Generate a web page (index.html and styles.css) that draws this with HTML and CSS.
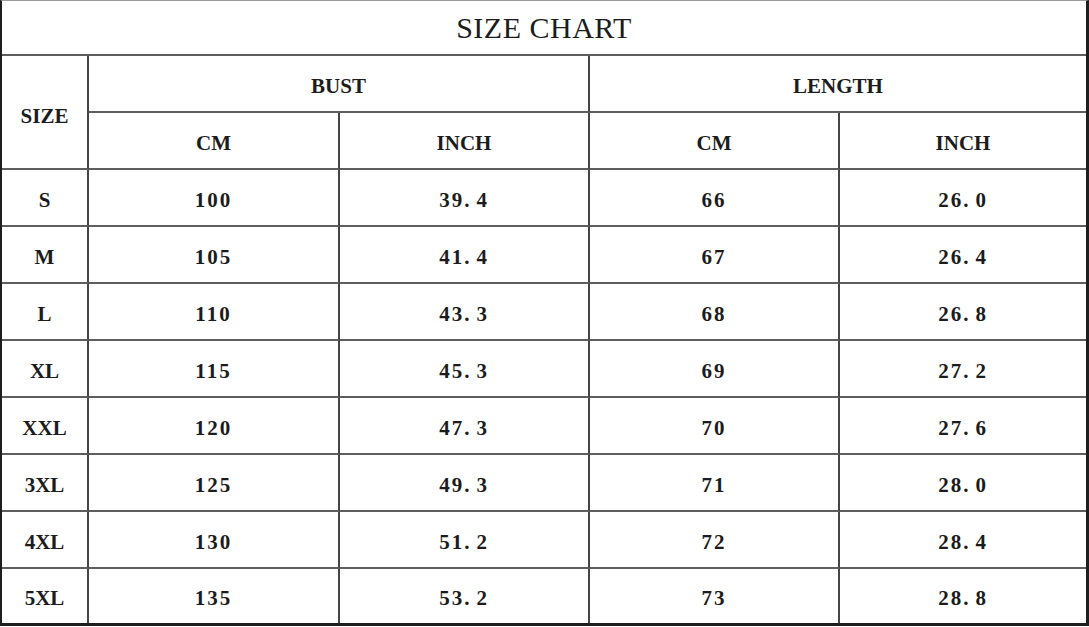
FILE: index.html
```html
<!DOCTYPE html>
<html lang="en">
<head>
<meta charset="utf-8">
<title>Size Chart</title>
<link rel="stylesheet" href="styles.css">
</head>
<body>
<table class="chart">
  <colgroup>
    <col class="c-size">
    <col class="c-a">
    <col class="c-b">
    <col class="c-c">
    <col class="c-d">
  </colgroup>
  <thead>
    <tr class="r-title"><th colspan="5" class="title">SIZE CHART</th></tr>
    <tr class="r-group"><th rowspan="2" class="size-head">SIZE</th><th colspan="2">BUST</th><th colspan="2">LENGTH</th></tr>
    <tr class="r-unit"><th>CM</th><th>INCH</th><th>CM</th><th>INCH</th></tr>
  </thead>
  <tbody>
    <tr><td>S</td><td class="num">100</td><td class="num">39<span class="dot">.</span>4</td><td class="num">66</td><td class="num">26<span class="dot">.</span>0</td></tr>
    <tr><td>M</td><td class="num">105</td><td class="num">41<span class="dot">.</span>4</td><td class="num">67</td><td class="num">26<span class="dot">.</span>4</td></tr>
    <tr><td>L</td><td class="num">110</td><td class="num">43<span class="dot">.</span>3</td><td class="num">68</td><td class="num">26<span class="dot">.</span>8</td></tr>
    <tr><td>XL</td><td class="num">115</td><td class="num">45<span class="dot">.</span>3</td><td class="num">69</td><td class="num">27<span class="dot">.</span>2</td></tr>
    <tr><td>XXL</td><td class="num">120</td><td class="num">47<span class="dot">.</span>3</td><td class="num">70</td><td class="num">27<span class="dot">.</span>6</td></tr>
    <tr><td>3XL</td><td class="num">125</td><td class="num">49<span class="dot">.</span>3</td><td class="num">71</td><td class="num">28<span class="dot">.</span>0</td></tr>
    <tr><td>4XL</td><td class="num">130</td><td class="num">51<span class="dot">.</span>2</td><td class="num">72</td><td class="num">28<span class="dot">.</span>4</td></tr>
    <tr class="r-last"><td>5XL</td><td class="num">135</td><td class="num">53<span class="dot">.</span>2</td><td class="num">73</td><td class="num">28<span class="dot">.</span>8</td></tr>
  </tbody>
</table>
</body>
</html>
```

FILE: styles.css
```css
html, body {
  margin: 0;
  padding: 0;
  background: #ffffff;
}

* {
  box-sizing: border-box;
}

.chart {
  border-collapse: separate;
  border-spacing: 0;
  table-layout: fixed;
  width: 1089px;
  border-left: 2px solid #1e1e1e;
  border-top: 1px solid #9a9a9a;
  border-right: 3px solid #1e1e1e;
  border-bottom: 3px solid #1e1e1e;
  font-family: "Liberation Serif", "Times New Roman", serif;
  color: #1c1c1c;
}

.c-size { width: 87px; }
.c-a { width: 251px; }
.c-b { width: 250px; }
.c-c { width: 250px; }
.c-d { width: 246px; }

.chart th,
.chart td {
  border-right: 2px solid #454545;
  border-bottom: 2px solid #5e5e5e;
  text-align: center;
  vertical-align: middle;
  font-weight: 700;
  font-size: 21px;
  padding: 5px 0 0;
  height: 57px;
}

.chart tr > :last-child {
  border-right: 0;
}

.chart .r-title th {
  height: 55px;
  padding: 0;
  font-weight: 400;
  font-size: 30px;
  letter-spacing: 0.5px;
}

.chart .r-group th,
.chart .r-unit th {
  height: 57px;
}

.chart .size-head {
  border-right: 2px solid #454545;
  padding-top: 8px;
}

.chart .r-last td {
  border-bottom: 0;
  height: 54px;
}

.num {
  letter-spacing: 2px;
}

.dot {
  margin-right: 5px;
}
```
